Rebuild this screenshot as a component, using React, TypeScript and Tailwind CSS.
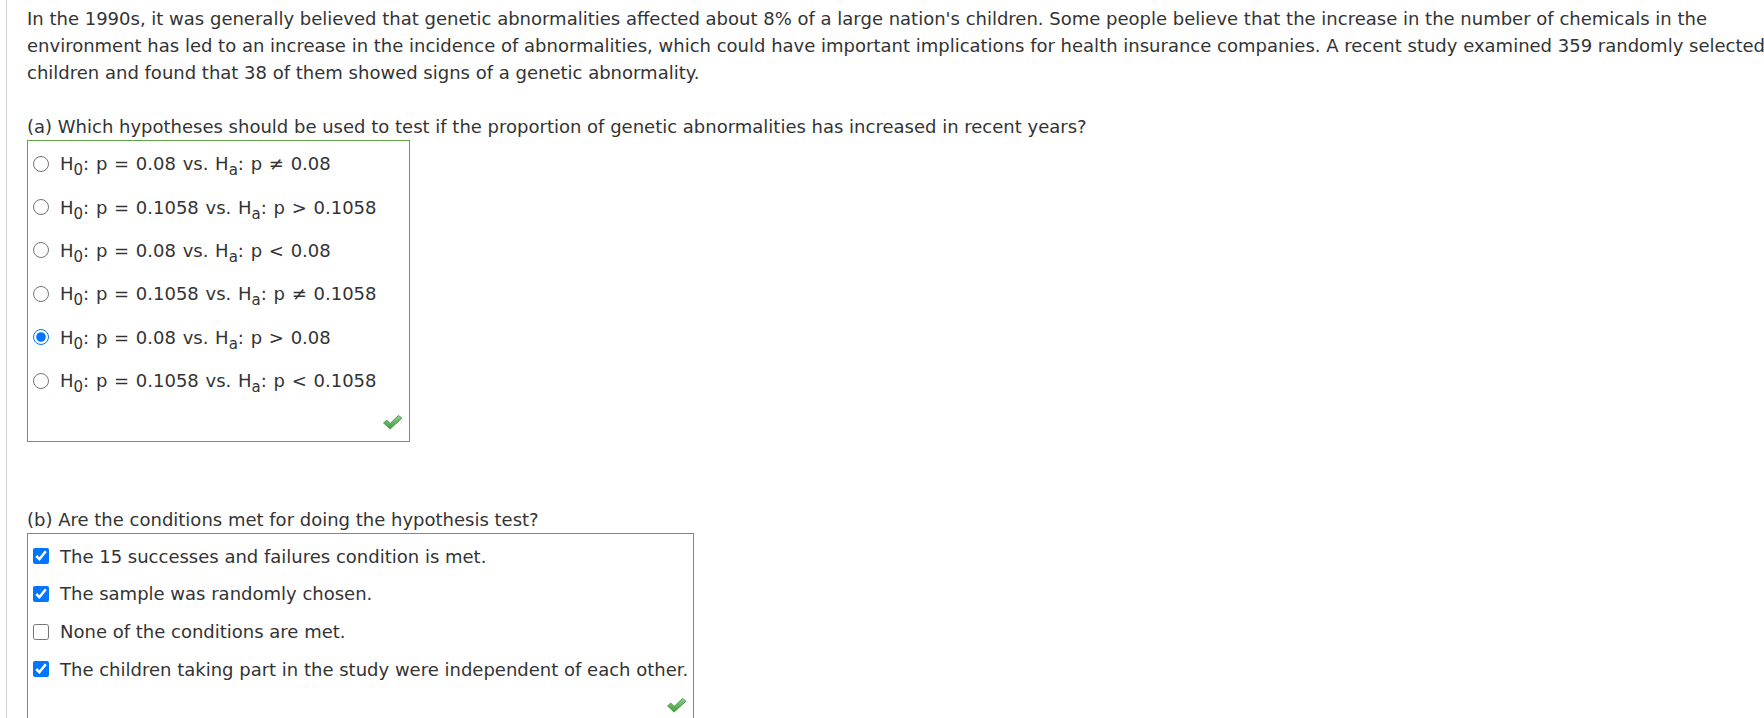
import React from "react";

const Sub = ({ c }: { c: string }) => (
  <span className="text-[15px] relative top-[5px] leading-none">{c}</span>
);

const Check = () => (
  <svg width="21" height="16" viewBox="0 0 22 17">
    <defs>
      <linearGradient id="g" x1="0" y1="0" x2="0" y2="1">
        <stop offset="0" stopColor="#8fd18a" />
        <stop offset="1" stopColor="#3f9a3d" />
      </linearGradient>
    </defs>
    <path
      d="M1.5 9.5 L5 6.5 L8.5 10 L17.5 1.5 L21 4.5 L8.5 16 Z"
      fill="url(#g)"
      stroke="#4a9a46"
      strokeWidth="1"
      strokeLinejoin="round"
    />
  </svg>
);

const radios: { l: string; op: string; r: string; checked?: boolean }[] = [
  { l: "0.08", op: "≠", r: "0.08" },
  { l: "0.1058", op: ">", r: "0.1058" },
  { l: "0.08", op: "<", r: "0.08" },
  { l: "0.1058", op: "≠", r: "0.1058" },
  { l: "0.08", op: ">", r: "0.08", checked: true },
  { l: "0.1058", op: "<", r: "0.1058" },
];

const checks: { t: string; c: boolean }[] = [
  { t: "The 15 successes and failures condition is met.", c: true },
  { t: "The sample was randomly chosen.", c: true },
  { t: "None of the conditions are met.", c: false },
  { t: "The children taking part in the study were independent of each other.", c: true },
];

export default function App() {
  return (
    <div className="w-[1764px] h-[718px] overflow-hidden bg-white flex font-['DejaVu_Sans','Liberation_Sans',sans-serif] text-[18px] text-[#333]">
      <div className="w-[6px] shrink-0" />
      <div className="w-px bg-[#d0d0d0] shrink-0" />
      <div className="pl-[20px] pt-[5px] flex-1 min-w-0">
        <div className="leading-[27px] whitespace-nowrap">
          <div>
            In the 1990s, it was generally believed that genetic abnormalities affected about 8% of a large nation's children. Some people believe that the increase in the number of chemicals in the
          </div>
          <div>
            environment has led to an increase in the incidence of abnormalities, which could have important implications for health insurance companies. A recent study examined 359 randomly selected
          </div>
          <div>children and found that 38 of them showed signs of a genetic abnormality.</div>
        </div>
        <p className="leading-[27px] mt-[27px] whitespace-nowrap">
          (a) Which hypotheses should be used to test if the proportion of genetic abnormalities has increased in recent years?
        </p>
        <div className="w-[383px] border border-[#63a346] pt-[1px] pb-[11px] pr-[6px]">
          {radios.map((o, i) => (
            <label key={i} className="flex items-center h-[43.4px] pl-[5px]">
              <input
                type="radio"
                name="a"
                defaultChecked={o.checked}
                className="w-[16px] h-[16px] m-0 accent-[#0075ff] shrink-0"
              />
              <span className="ml-[11px] whitespace-nowrap [word-spacing:1px]">
                H<Sub c="0" />: p = {o.l} vs. H<Sub c="a" />: p {o.op} {o.r}
              </span>
            </label>
          ))}
          <div className="flex justify-end h-[28px] items-end">
            <Check />
          </div>
        </div>
        <p className="leading-[27px] mt-[64px] whitespace-nowrap">
          (b) Are the conditions met for doing the hypothesis test?
        </p>
        <div className="w-[667px] border border-[#63a346] pt-[3px] pb-[10px] pr-[6px]">
          {checks.map((o, i) => (
            <label key={i} className="flex items-center h-[37.7px] pl-[5px]">
              <input
                type="checkbox"
                defaultChecked={o.c}
                className="w-[16px] h-[16px] m-0 accent-[#0075ff] shrink-0"
              />
              <span className="ml-[11px] whitespace-nowrap">{o.t}</span>
            </label>
          ))}
          <div className="flex justify-end h-[25px] items-end">
            <Check />
          </div>
        </div>
      </div>
    </div>
  );
}
